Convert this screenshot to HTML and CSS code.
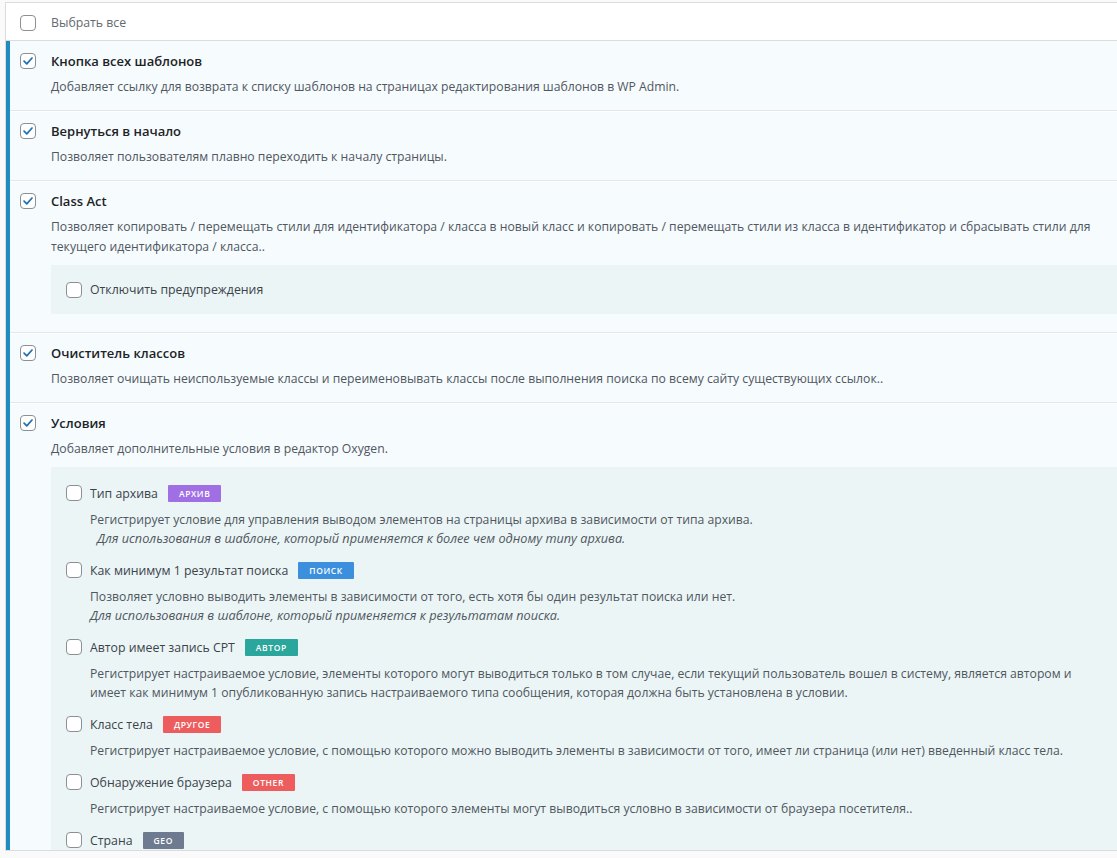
FILE: index.html
```html
<!DOCTYPE html>
<html lang="ru">
<head>
<meta charset="utf-8">
<title>Модули</title>
<link rel="stylesheet" href="styles.css">
</head>
<body>
<div class="list">
  <div class="head">
    <span class="cb"></span>
    <span class="head-label">Выбрать все</span>
  </div>
  <div class="body">
    <div class="row">
      <div class="row-title"><span class="cb checked"><svg viewBox="0 0 16 16"><path d="M3.5 8.2 L6.6 11.2 L12.6 4.6"/></svg></span><span class="title">Кнопка всех шаблонов</span></div>
      <p class="desc">Добавляет ссылку для возврата к списку шаблонов на страницах редактирования шаблонов в WP Admin.</p>
    </div>
    <div class="row">
      <div class="row-title"><span class="cb checked"><svg viewBox="0 0 16 16"><path d="M3.5 8.2 L6.6 11.2 L12.6 4.6"/></svg></span><span class="title">Вернуться в начало</span></div>
      <p class="desc">Позволяет пользователям плавно переходить к началу страницы.</p>
    </div>
    <div class="row">
      <div class="row-title"><span class="cb checked"><svg viewBox="0 0 16 16"><path d="M3.5 8.2 L6.6 11.2 L12.6 4.6"/></svg></span><span class="title">Class Act</span></div>
      <p class="desc">Позволяет копировать / перемещать стили для идентификатора / класса в новый класс и копировать / перемещать стили из класса в идентификатор и сбрасывать стили для текущего идентификатора / класса..</p>
      <div class="panel panel-small">
        <div class="opt"><span class="cb"></span><span class="opt-label">Отключить предупреждения</span></div>
      </div>
    </div>
    <div class="row">
      <div class="row-title"><span class="cb checked"><svg viewBox="0 0 16 16"><path d="M3.5 8.2 L6.6 11.2 L12.6 4.6"/></svg></span><span class="title">Очиститель классов</span></div>
      <p class="desc">Позволяет очищать неиспользуемые классы и переименовывать классы после выполнения поиска по всему сайту существующих ссылок..</p>
    </div>
    <div class="row row-last">
      <div class="row-title"><span class="cb checked"><svg viewBox="0 0 16 16"><path d="M3.5 8.2 L6.6 11.2 L12.6 4.6"/></svg></span><span class="title">Условия</span></div>
      <p class="desc">Добавляет дополнительные условия в редактор Oxygen.</p>
      <div class="panel">
        <div class="item">
          <div class="opt"><span class="cb"></span><span class="opt-label">Тип архива</span><span class="badge b-archive">Архив</span></div>
          <p class="sub">Регистрирует условие для управления выводом элементов на страницы архива в зависимости от типа архива.<br><em class="note note-indent">Для использования в шаблоне, который применяется к более чем одному типу архива.</em></p>
        </div>
        <div class="item">
          <div class="opt"><span class="cb"></span><span class="opt-label">Как минимум 1 результат поиска</span><span class="badge b-search">Поиск</span></div>
          <p class="sub">Позволяет условно выводить элементы в зависимости от того, есть хотя бы один результат поиска или нет.<br><em class="note">Для использования в шаблоне, который применяется к результатам поиска.</em></p>
        </div>
        <div class="item">
          <div class="opt"><span class="cb"></span><span class="opt-label">Автор имеет запись CPT</span><span class="badge b-author">Автор</span></div>
          <p class="sub">Регистрирует настраиваемое условие, элементы которого могут выводиться только в том случае, если текущий пользователь вошел в систему, является автором и имеет как минимум 1 опубликованную запись настраиваемого типа сообщения, которая должна быть установлена в условии.</p>
        </div>
        <div class="item">
          <div class="opt"><span class="cb"></span><span class="opt-label">Класс тела</span><span class="badge b-other">Другое</span></div>
          <p class="sub">Регистрирует настраиваемое условие, с помощью которого можно выводить элементы в зависимости от того, имеет ли страница (или нет) введенный класс тела.</p>
        </div>
        <div class="item">
          <div class="opt"><span class="cb"></span><span class="opt-label">Обнаружение браузера</span><span class="badge b-other">Other</span></div>
          <p class="sub">Регистрирует настраиваемое условие, с помощью которого элементы могут выводиться условно в зависимости от браузера посетителя..</p>
        </div>
        <div class="item">
          <div class="opt"><span class="cb"></span><span class="opt-label">Страна</span><span class="badge b-geo">Geo</span></div>
        </div>
      </div>
    </div>
  </div>
</div>
</body>
</html>
```

FILE: styles.css
```css
html, body {
  margin: 0;
  padding: 0;
}
body {
  background: #fafafa;
  font-family: "Open Sans", "Noto Sans", sans-serif;
  font-size: 12.2px;
  color: #50575e;
  height: 858px;
  overflow: hidden;
}
.list {
  margin: 2px 0 0 5px;
  border: 1px solid #dcdcde;
  border-right: none;
  background: #fff;
}
.head {
  display: flex;
  align-items: center;
  height: 35px;
  padding: 2px 0 0 14px;
  border-bottom: 1px solid #dcdcde;
  background: #fff;
}
.head-label {
  margin-left: 15px;
  color: #646970;
  font-size: 12.3px;
}
.cb {
  width: 14px;
  height: 14px;
  flex: none;
  border: 1px solid #8c8f94;
  border-radius: 4px;
  background: #fff;
  display: inline-flex;
  align-items: center;
  justify-content: center;
}
.cb svg {
  width: 14px;
  height: 14px;
}
.cb svg path {
  fill: none;
  stroke: #2271b1;
  stroke-width: 2;
  stroke-linecap: round;
  stroke-linejoin: round;
}
.body {
  border-left: 4px solid #1e8cbe;
  background: #f6fbfe;
  height: 809px;
  overflow: hidden;
}
.row {
  padding: 10px 0 13px 10px;
  border-bottom: 1px solid #e3e7ea;
  box-shadow: 0 1px 0 #ffffff;
}
.row-last {
  border-bottom: none;
  box-shadow: none;
}
.row-title {
  display: flex;
  align-items: center;
  height: 20px;
}
.title {
  margin-left: 15px;
  font-weight: 600;
  font-size: 13px;
  color: #1d2327;
}
.desc {
  margin: 6px 0 0 31px;
  line-height: 20px;
  padding-right: 8px;
}
.panel {
  margin: 8px 0 0 31px;
  background: #ebf5f6;
  padding: 16px 15px 0 15px;
}
.panel-small {
  height: 49px;
  box-sizing: border-box;
  padding-top: 0;
  display: flex;
  align-items: center;
  margin-bottom: 5px;
}
.opt {
  display: flex;
  align-items: center;
  height: 20px;
}
.opt-label {
  margin-left: 8px;
  color: #3c434a;
  font-size: 12.3px;
}
.item {
  margin-bottom: 12px;
}
.sub {
  margin: 7px 0 0 24px;
  line-height: 19px;
  padding-right: 22px;
}
.note {
  color: #50575e;
  font-size: 12.7px;
}
.note-indent {
  margin-left: 7px;
}
.badge {
  margin-left: 10px;
  height: 17px;
  padding: 0 11px;
  display: inline-flex;
  align-items: center;
  font-size: 8.5px;
  font-weight: 600;
  letter-spacing: 0.6px;
  text-transform: uppercase;
  color: #fff;
  border-radius: 1px;
}
.b-archive { background: #a06fe3; }
.b-search { background: #3b8fdc; }
.b-author { background: #2aa69c; }
.b-other { background: #ee5d5d; }
.b-geo { background: #6d7a90; }
```
